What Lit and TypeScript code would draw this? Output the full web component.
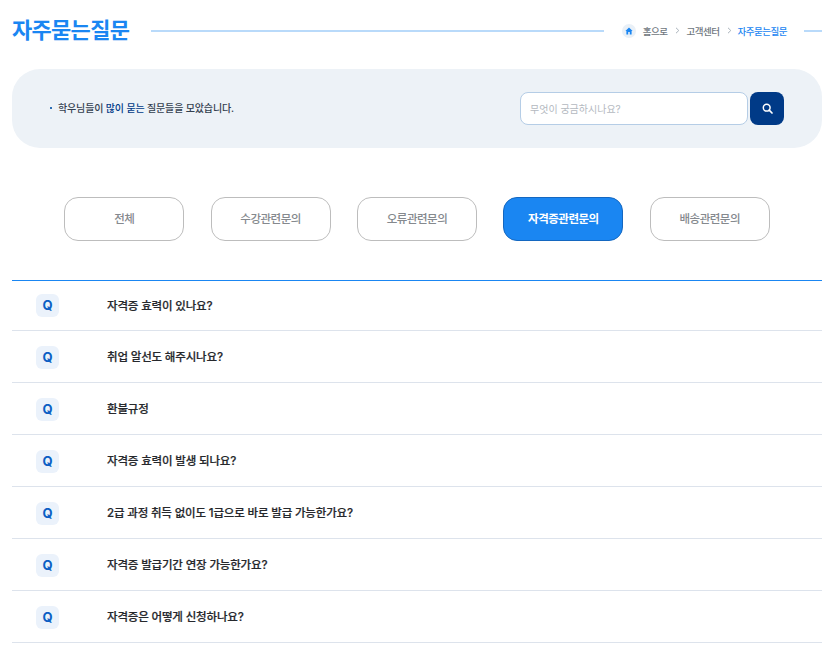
import { LitElement, html, css, svg } from "lit";
import { customElement } from "lit/decorators.js";

const tabs = ["전체", "수강관련문의", "오류관련문의", "자격증관련문의", "배송관련문의"];
const faqs = [
  "자격증 효력이 있나요?",
  "취업 알선도 해주시나요?",
  "환불규정",
  "자격증 효력이 발생 되나요?",
  "2급 과정 취득 없이도 1급으로 바로 발급 가능한가요?",
  "자격증 발급기간 연장 가능한가요?",
  "자격증은 어떻게 신청하나요?",
];
const chevron = (cls = "") => svg`<svg class="chev ${cls}" width="5" height="7" viewBox="0 0 5 7"><path d="M1 .8 3.8 3.5 1 6.2" fill="none" stroke="#a9b2bb" stroke-width="1"/></svg>`;

@customElement("app-root")
export class AppRoot extends LitElement {
  static styles = css`
    :host { display: block; width: 829px; height: 654px; overflow: hidden; background: #fff;
      font-family: Inter, "Noto Sans CJK KR", sans-serif; box-sizing: border-box; padding: 0 7px 0 12px; }
    * { box-sizing: border-box; }
    .head { display: flex; align-items: center; height: 61px; }
    h1 { margin: 0; font-size: 22px; line-height: 61px; font-weight: 700; color: #1a86f2; letter-spacing: -.7px; width: 117px; white-space: nowrap; }
    .line { height: 2px; background: #b9dafa; }
    .line.main { flex: 1; margin-left: 22px; }
    .line.end { width: 18px; margin-left: 17px; }
    .crumbs { display: flex; align-items: center; margin-left: 18px; font-size: 9.5px; font-weight: 500; color: #6f7781; letter-spacing: -.5px; }
    .home { width: 14px; height: 14px; border-radius: 50%; background: #e9f0f7; display: flex; align-items: center; justify-content: center; margin-right: 7px; }
    .chev { margin: 0 6px 0 7px; }
    .chev.first { margin-right: 7px; }
    .crumbs .cur { color: #1a86f2; }
    .panel { margin-top: 8px; height: 79px; border-radius: 28px; background: #edf2f7; display: flex; align-items: center; padding: 0 38px; }
    .note { flex: 1; display: flex; align-items: center; font-size: 10px; font-weight: 500; color: #33404f; letter-spacing: -.15px; padding-bottom: 2px; }
    .dot { width: 2px; height: 2px; background: #2d6fb5; margin-right: 6px; }
    .note b { font-weight: 500; color: #003a87; }
    .search { display: flex; gap: 2px; }
    .input { width: 228px; height: 33px; background: #fff; border: 1px solid #b5cde6; border-radius: 8px; padding: 0 9px 1px; display: flex; align-items: center; font-size: 10px; color: #b4b9bf; }
    .btn { width: 34px; height: 33px; background: #003a87; border-radius: 8px; border: 0; padding: 0; display: flex; align-items: center; justify-content: center; }
    .tabs { display: flex; justify-content: center; gap: 26.4px; margin-top: 49px; }
    .tab { width: 120px; height: 44px; border: 1px solid #bdbdbd; border-radius: 14px; display: flex; align-items: center; justify-content: center; font-size: 11.5px; font-weight: 500; color: #85898e; letter-spacing: -.5px; background: #fff; padding-bottom: 2px; }
    .tab.on { background: #1a86f2; border-color: #1467c0; color: #fff; font-weight: 700; }
    .list { margin-top: 39px; border-top: 1px solid #1a86f2; }
    .row { display: flex; align-items: center; height: 52px; border-bottom: 1px solid #dde3ec; padding-left: 24px; }
    .row:first-child { height: 50px; }
    .q { width: 23px; height: 23px; border-radius: 6px; background: #ebf2fb; color: #0b5fc4; font-size: 13px; font-weight: 700; display: flex; align-items: center; justify-content: center; margin: 2px 48px 0 0; padding-bottom: 1px; }
    .row:first-child .q { margin-top: 0; }
    .t { font-size: 11.5px; font-weight: 500; -webkit-text-stroke: .2px #26282c; color: #26282c; letter-spacing: -.17px; padding-bottom: 2px; }
  `;

  render() {
    return html`
      <div class="head">
        <h1>자주묻는질문</h1>
        <div class="line main"></div>
        <div class="crumbs">
          <span class="home"><svg width="8" height="8" viewBox="0 0 8 8"><path d="M4 .6 .4 4H1.4V7.4H3.2V5H4.8V7.4H6.6V4H7.6Z" fill="#1a86f2"/></svg></span>
          <span>홈으로</span>${chevron("first")}<span>고객센터</span>${chevron()}<span class="cur">자주묻는질문</span>
        </div>
        <div class="line end"></div>
      </div>
      <div class="panel">
        <div class="note"><span class="dot"></span><span>학우님들이 <b>많이 묻는</b> 질문들을 모았습니다.</span></div>
        <div class="search">
          <div class="input">무엇이 궁금하시나요?</div>
          <button class="btn" aria-label="검색"><svg width="11" height="11" viewBox="0 0 11 11"><circle cx="4.7" cy="4.7" r="3.4" fill="none" stroke="#fff" stroke-width="1.5"/><path d="M7.2 7.2 10 10" stroke="#fff" stroke-width="1.7" stroke-linecap="round"/></svg></button>
        </div>
      </div>
      <div class="tabs">
        ${tabs.map((t, i) => html`<div class="tab ${i === 3 ? "on" : ""}">${t}</div>`)}
      </div>
      <div class="list">
        ${faqs.map((f) => html`<div class="row"><span class="q">Q</span><span class="t">${f}</span></div>`)}
      </div>
    `;
  }
}
